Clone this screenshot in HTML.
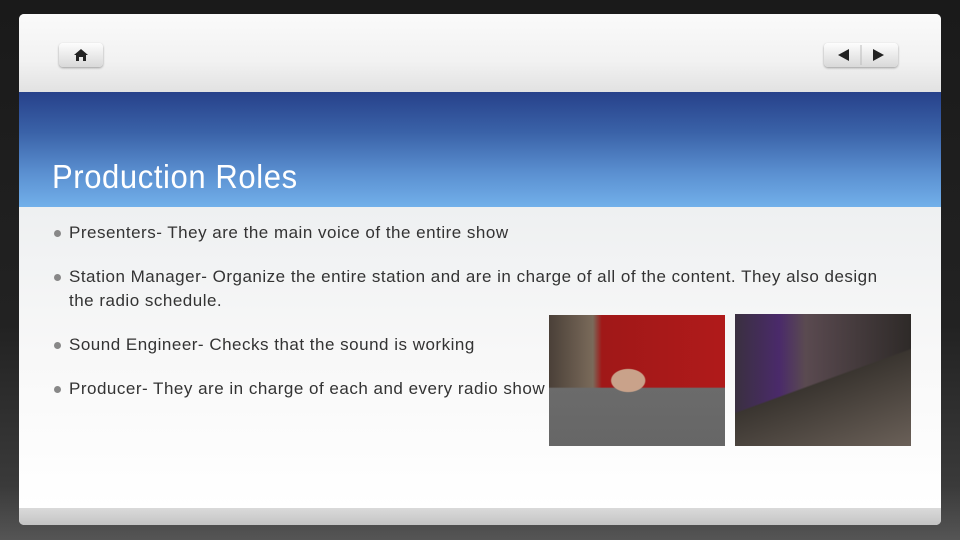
<!DOCTYPE html>
<html><head><meta charset="utf-8"><style>
html,body{margin:0;padding:0}
body{width:960px;height:540px;position:relative;overflow:hidden;background:linear-gradient(180deg,#1a1a1a 0%,#222 60%,#3a3a3a 90%,#555 100%);font-family:"Liberation Sans",sans-serif}
.slide{position:absolute;left:19px;top:14px;width:922px;height:511px;border-radius:5px;overflow:hidden;background:linear-gradient(180deg,#f4f4f4 0%,#f7f7f7 40%,#fff 100%)}
.top{position:absolute;left:0;top:0;width:922px;height:78px;background:linear-gradient(180deg,#fafafa 0%,#f2f2f2 60%,#e2e2e2 100%)}
.band{position:absolute;left:0;top:78px;width:922px;height:115px;background:linear-gradient(180deg,#27418a 0%,#3a62a8 35%,#5a8fd0 70%,#72b0ea 100%)}
.title{position:absolute;left:33px;top:144px;color:#fff;font-size:31px;letter-spacing:0.6px;transform:scaleY(1.08);transform-origin:left top}
.btn{position:absolute;top:29px;height:24px;border-radius:4px;background:linear-gradient(#fdfdfd,#d9d9d9);box-shadow:0 1px 2px rgba(0,0,0,.35)}
.content{position:absolute;left:0;top:193px;width:922px;height:301px;background:linear-gradient(180deg,#eef0f1 0%,#f8f8f8 50%,#fff 100%)}
.foot{position:absolute;left:0;top:494px;width:922px;height:17px;background:linear-gradient(#dadada,#c4c4c4)}
.li{position:absolute;left:50px;font-size:17px;color:#333;line-height:24px;letter-spacing:0.5px;white-space:nowrap}
.li:before{content:"";position:absolute;left:-15px;top:9px;width:7px;height:7px;border-radius:50%;background:#888}
.p1{position:absolute;left:530px;top:301px;width:176px;height:131px;background:radial-gradient(ellipse at 45% 50%,#c9a28a 0 12%,transparent 13%),linear-gradient(180deg,transparent 55%,#6b6b6b 56%,#666 100%),linear-gradient(90deg,#4a4038 0%,#7a6a5a 25%,#a01818 30%,#b01a1a 100%)}
.p2{position:absolute;left:716px;top:300px;width:176px;height:132px;background:linear-gradient(160deg,transparent 50%,#3a3530 51%,#6a6058 100%),linear-gradient(90deg,#3a3040 0%,#4a2a6a 25%,#5a4a50 40%,#2e2a28 100%)}
</style></head><body>
<div class="slide">
 <div class="top"></div>
 <div class="btn" style="left:40px;width:44px">
  <svg width="44" height="24"><path d="M22 6 L15 12 L17 12 L17 18 L20 18 L20 14 L24 14 L24 18 L27 18 L27 12 L29 12 Z" fill="#222"/></svg>
 </div>
 <div class="btn" style="left:805px;width:74px">
  <svg width="74" height="24"><path d="M14 12 L25 6 L25 18 Z" fill="#222"/><line x1="37" y1="2" x2="37" y2="22" stroke="#bbb"/><path d="M60 12 L49 6 L49 18 Z" fill="#222"/></svg>
 </div>
 <div class="band"></div>
 <div class="title">Production Roles</div>
 <div class="content"></div>
 <div class="li" style="top:207px">Presenters- They are the main voice of the entire show</div>
 <div class="li" style="top:251px">Station Manager- Organize the entire station and are in charge of all of the content. They also design<br>the radio schedule.</div>
 <div class="li" style="top:319px">Sound Engineer- Checks that the sound is working</div>
 <div class="li" style="top:363px">Producer- They are in charge of each and every radio show</div>
 <div class="p1"></div>
 <div class="p2"></div>
 <div class="foot"></div>
</div>
</body></html>
